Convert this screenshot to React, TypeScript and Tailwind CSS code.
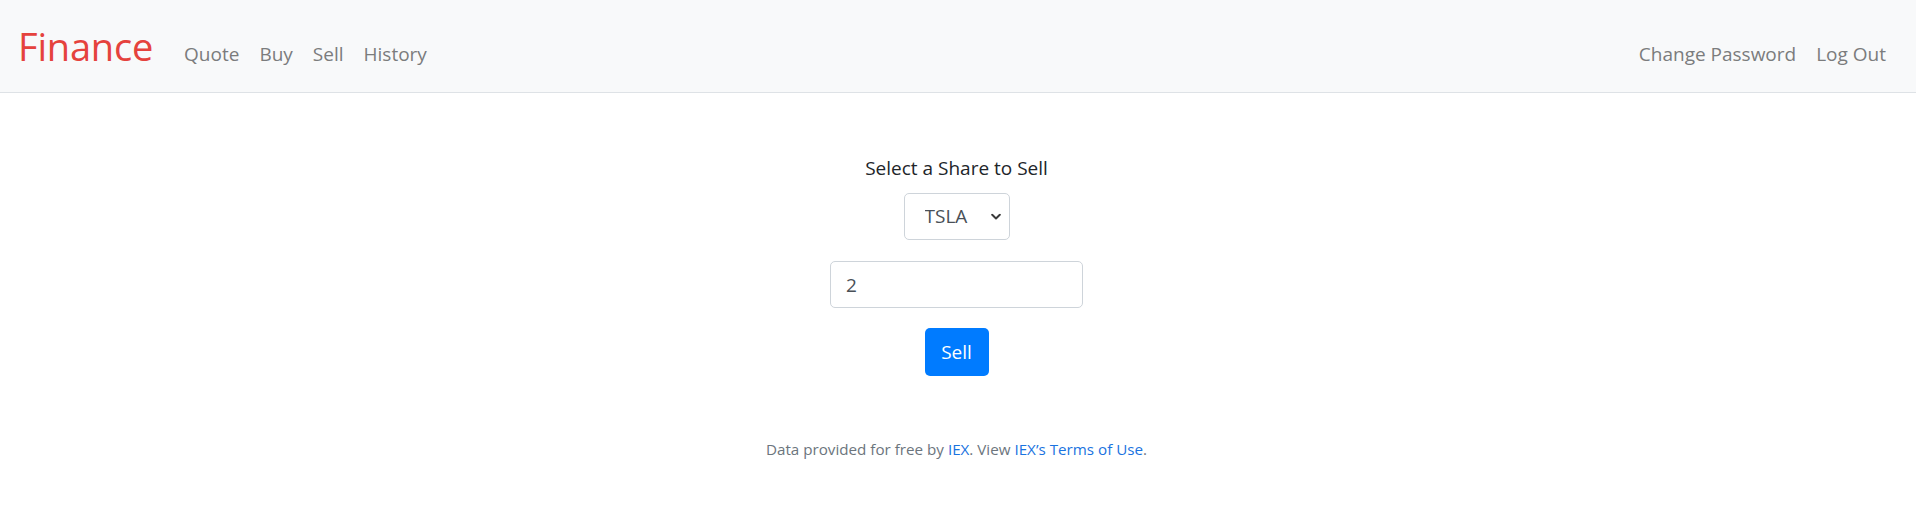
import React, { useState } from 'react';

const font = { fontFamily: '"Open Sans", "Noto Sans", Arial, sans-serif' };

const Chevron = () => (
  <svg width="10" height="7" viewBox="0 0 10 7" className="pointer-events-none absolute right-[9px] top-1/2 -translate-y-1/2">
    <path d="M1.2 1.3 L5 5 L8.8 1.3" fill="none" stroke="#3a3a3a" strokeWidth="2" strokeLinecap="round" strokeLinejoin="round" />
  </svg>
);

export default function App() {
  const [symbol, setSymbol] = useState('TSLA');
  const [shares, setShares] = useState('2');

  return (
    <div className="min-h-screen bg-white text-[#212529]" style={font}>
      <nav className="h-[93px] bg-[#f8f9fa] border-b border-[#dee2e6] flex items-center pl-[18px] pr-[20px]">
        <div className="flex flex-1 items-baseline">
          <a href="#" className="text-[38px] leading-[60px] text-[#e5423d] mr-[21px] tracking-[-0.2px]">
            Finance
          </a>
          <ul className="flex text-[19px] text-[#7b7c7d]">
            <li><a href="#" className="block px-[10px]">Quote</a></li>
            <li><a href="#" className="block px-[10px]">Buy</a></li>
            <li><a href="#" className="block px-[10px]">Sell</a></li>
            <li><a href="#" className="block px-[10px]">History</a></li>
          </ul>
          <ul className="ml-auto flex text-[19px] text-[#7b7c7d]">
            <li><a href="#" className="block px-[10px]">Change Password</a></li>
            <li><a href="#" className="block px-[10px]">Log Out</a></li>
          </ul>
        </div>
      </nav>

      <main className="pt-[60px] pb-[60px] pr-[3px] flex flex-col items-center">
        <p className="text-[19px] leading-[30px]">Select a Share to Sell</p>
        <div className="relative mt-[10px]">
          <select
            value={symbol}
            onChange={(e) => setSymbol(e.target.value)}
            className="appearance-none w-[106px] h-[47px] pl-[20px] pr-[28px] text-[19px] text-[#495057] bg-white border border-[#ced4da] rounded-[5px]"
            style={font}
          >
            <option value="TSLA">TSLA</option>
            <option value="AAPL">AAPL</option>
          </select>
          <Chevron />
        </div>
        <input
          type="number"
          value={shares}
          onChange={(e) => setShares(e.target.value)}
          className="mt-[21px] w-[253px] h-[47px] px-[15px] text-[19px] text-[#495057] bg-white border border-[#ced4da] rounded-[5px] [appearance:textfield]"
          style={font}
        />
        <button className="mt-[20px] w-[64px] h-[48px] bg-[#007bff] text-white text-[19px] rounded-[5px]" style={font}>
          Sell
        </button>
      </main>

      <footer className="text-center text-[15.2px] leading-[26px] text-[#6c757d] pr-[3px]">
        Data provided for free by <a href="#" className="text-[#1a73e0]">IEX</a>. View{' '}
        <a href="#" className="text-[#1a73e0]">IEX’s Terms of Use</a>.
      </footer>
    </div>
  );
}
